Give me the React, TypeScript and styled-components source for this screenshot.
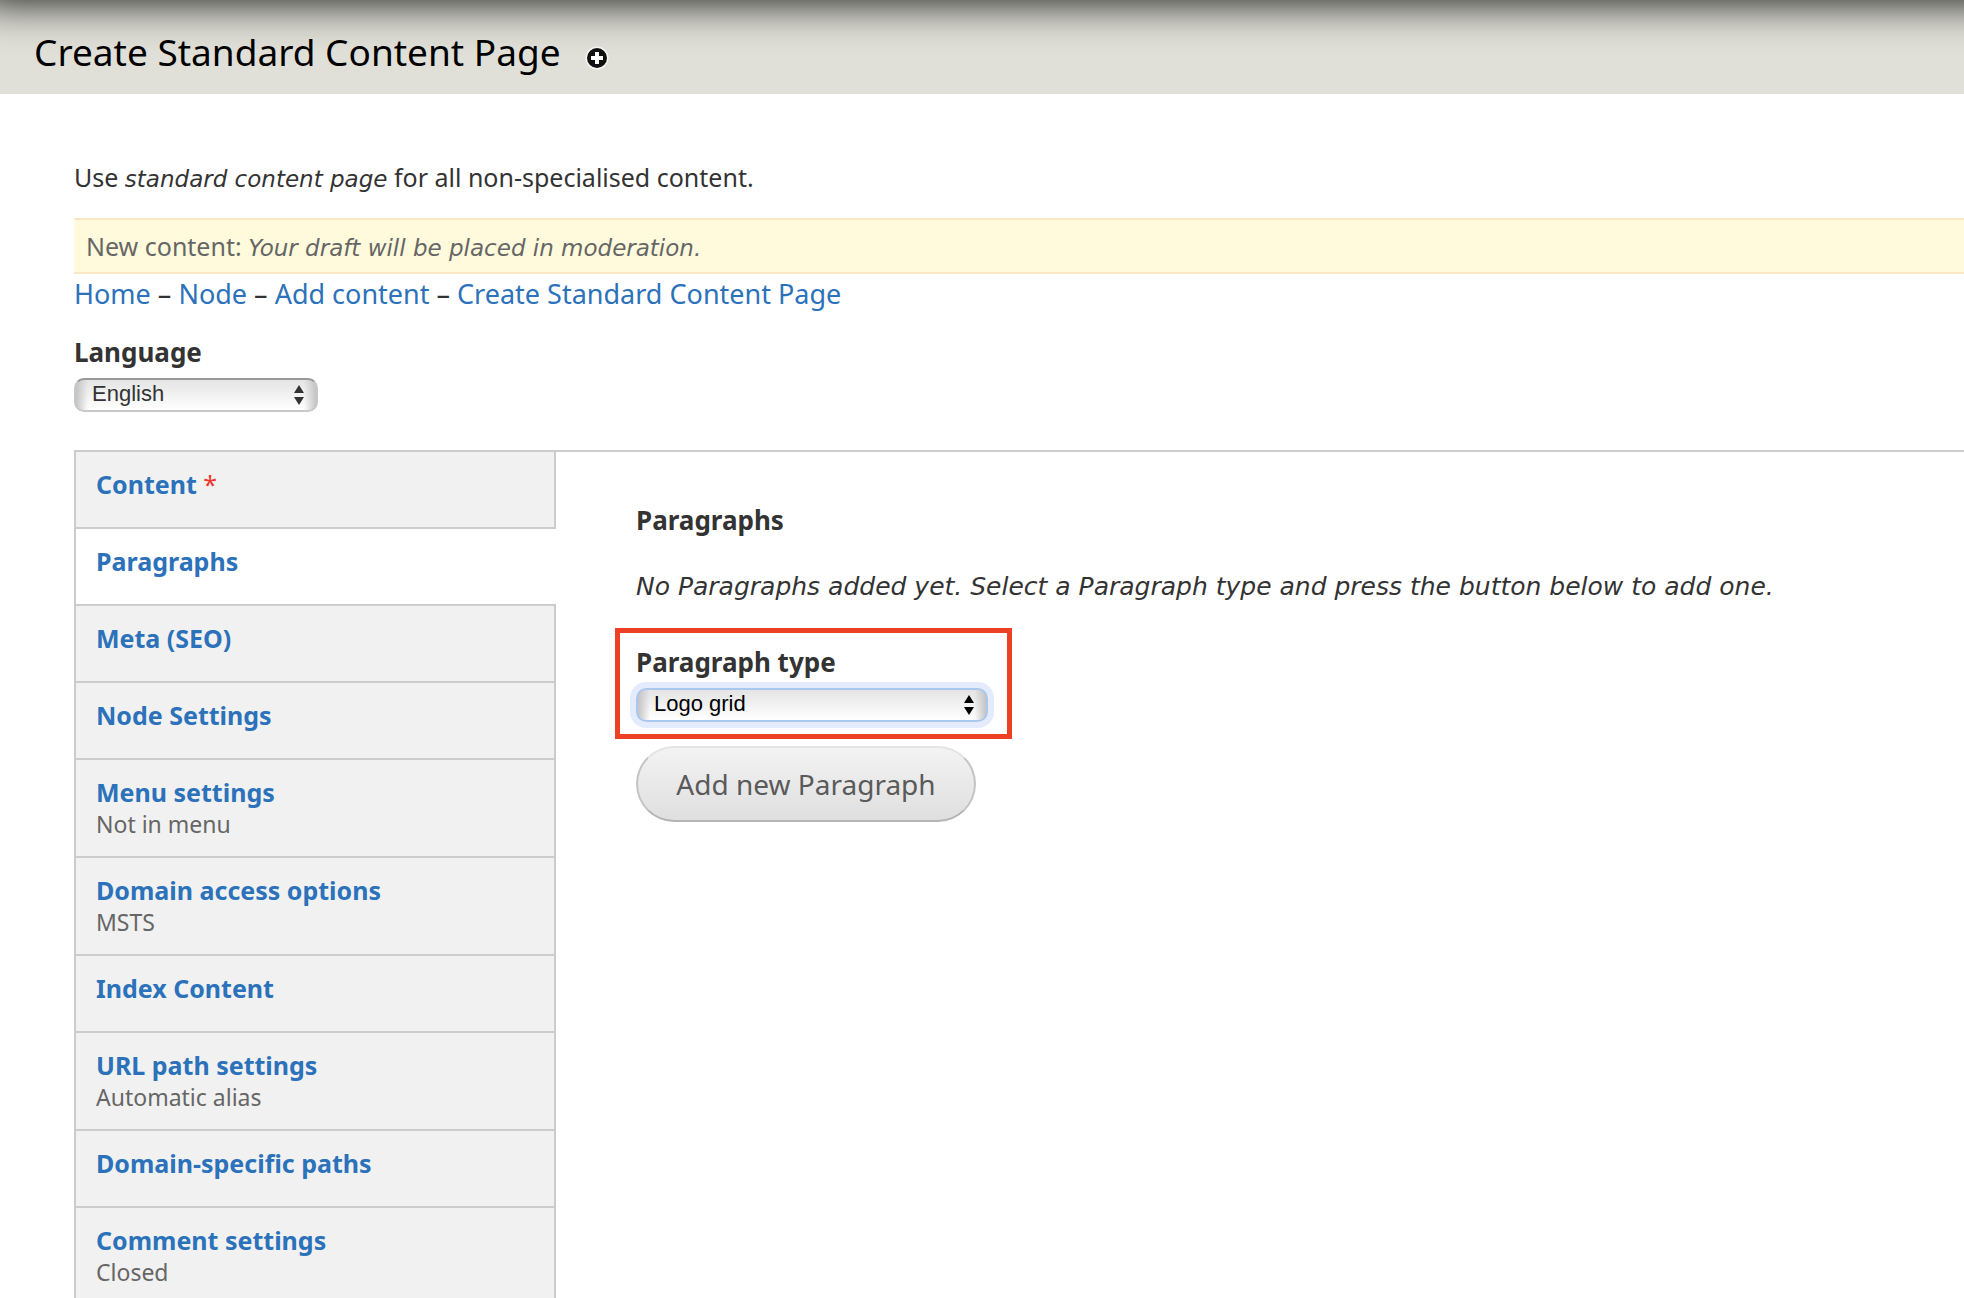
import React from "react";
import styled, { createGlobalStyle, css } from "styled-components";

const sans = `"Lucida Grande", "Noto Sans", "Open Sans", sans-serif`;
const oblique = `"Lucida Grande", "DejaVu Sans", "Noto Sans", sans-serif`;
const control = `"Liberation Sans", Arial, sans-serif`;

const GlobalStyle = createGlobalStyle`
  *, *::before, *::after { box-sizing: border-box; }
  html { overflow: hidden; height: 100%; }
  body {
    margin: 0;
    height: 100%;
    overflow: hidden;
    background: #fff;
    color: #333;
    font-family: ${sans};
    font-size: 25px;
    line-height: 34px;
  }
`;

const Page = styled.div`
  display: flex;
  flex-direction: column;
`;

const ToolbarShadow = styled.div`
  position: absolute;
  z-index: 1;
  top: -100px;
  left: -24px;
  right: -100px;
  height: 100px;
  pointer-events: none;
  box-shadow: 0 0 46px #000;
`;

const Header = styled.header`
  display: flex;
  align-items: center;
  gap: 24px;
  height: 94px;
  padding: 10px 34px 0;
  background: #e0e0d8;
`;

const PageTitle = styled.h1`
  margin: 0;
  color: #000;
  font-size: 37px;
  font-weight: 400;
  line-height: 48px;
`;

const ShortcutButton = styled.button`
  display: flex;
  margin: 12px 0 0;
  padding: 0;
  border: 0;
  background: none;
  cursor: pointer;
`;

const Main = styled.main`
  display: flex;
  flex-direction: column;
  padding: 66px 0 0 74px;
`;

const Emphasis = styled.em`
  font-family: ${oblique};
  font-size: 23px;
  line-height: 24px;
`;

const Help = styled.p`
  margin: 0 0 24px;
`;

const Message = styled.div`
  padding: 9px 12px;
  border: solid #fbe7c4;
  border-width: 2px 0;
  background: #fefadb;
  color: #666;
`;

const Breadcrumb = styled.nav`
  padding: 3px 0 5px;
  font-size: 27px;
`;

const Link = styled.a`
  color: #2c72ba;
  text-decoration: none;
`;

const Field = styled.div<{ $width: number }>`
  position: relative;
  display: flex;
  flex-direction: column;
  gap: 9px;
  width: ${(p) => p.$width}px;
`;

const Label = styled.label`
  font-size: 26px;
  font-weight: 700;
`;

const LanguageArea = styled.div`
  padding: 19px 0 38px;
`;

const HighlightedField = styled(Field)`
  margin-bottom: 24px;
  &::after {
    content: "";
    position: absolute;
    inset: -17px -24px -17px -21px;
    border: 5px solid #ed4125;
    pointer-events: none;
  }
`;

const SelectBox = styled.div`
  display: grid;
  align-items: center;
  > * { grid-area: 1 / 1; }
`;

const SelectControl = styled.select<{ $focused?: boolean }>`
  appearance: none;
  width: 100%;
  height: 34px;
  padding: 0 40px 2px 16px;
  border: 2px solid #c8c8c8;
  border-top-color: #999;
  border-radius: 10px;
  outline: none;
  color: #333;
  font-family: ${control};
  font-size: 22px;
  line-height: 26px;
  background:
    linear-gradient(90deg, #c4c4c4, rgba(224, 224, 224, 0) 12px calc(100% - 12px), #c4c4c4),
    linear-gradient(#e4e4e4, #fff);
  ${(p) => p.$focused && css`
    border-color: #a9c8ed;
    color: #000;
    box-shadow: 0 0 0 6px #e3ebfc;
  `}
`;

const Arrows = styled.svg<{ $dark?: boolean }>`
  justify-self: end;
  margin-right: 14px;
  fill: ${(p) => (p.$dark ? "#000" : "#333")};
  pointer-events: none;
`;

const Tabs = styled.div`
  display: flex;
  align-items: flex-start;
  border-top: 2px solid #ccc;
`;

const TabList = styled.ul`
  flex: 0 0 482px;
  margin: 0;
  padding: 0;
  border-left: 2px solid #ccc;
  list-style: none;
`;

const Tab = styled.li<{ $selected?: boolean }>`
  border-right: ${(p) => (p.$selected ? "0" : "2px solid #ccc")};
  background: ${(p) => (p.$selected ? "#fff" : "#f1f1f1")};
`;

const TabLink = styled.a`
  display: flex;
  flex-direction: column;
  min-height: 77px;
  padding: 15px 20px 17px;
  border-bottom: 2px solid #ccc;
  color: #2c72ba;
  text-decoration: none;
`;

const TabTitle = styled.strong`
  line-height: 34px;
`;

const Required = styled.span`
  color: #f0372b;
  font-weight: 400;
`;

const Summary = styled.span`
  color: #666;
  font-size: 23px;
  line-height: 30px;
`;

const Panel = styled.section`
  flex: 1;
  min-width: 0;
  padding: 51px 40px 0 80px;
`;

const PanelTitle = styled.h2`
  margin: 0 0 33px;
  font-size: 26px;
  line-height: 34px;
`;

const EmptyText = styled.p`
  margin: 0 0 41px;
  font-family: ${oblique};
  font-style: italic;
`;

const AddButton = styled.button`
  min-width: 340px;
  height: 76px;
  padding: 0 36px;
  border: 2px solid #c4c4c4;
  border-top-color: #e4e4e4;
  border-bottom-color: #b4b4b4;
  border-radius: 38px;
  background: linear-gradient(#f3f3f3, #dfdfdf);
  color: #5a5a5a;
  font-family: ${sans};
  font-size: 28px;
  cursor: pointer;
`;

type TabItem = { title: string; summary?: string; required?: boolean };

const tabs: TabItem[] = [
  { title: "Content", required: true },
  { title: "Paragraphs" },
  { title: "Meta (SEO)" },
  { title: "Node Settings" },
  { title: "Menu settings", summary: "Not in menu" },
  { title: "Domain access options", summary: "MSTS" },
  { title: "Index Content" },
  { title: "URL path settings", summary: "Automatic alias" },
  { title: "Domain-specific paths" },
  { title: "Comment settings", summary: "Closed" },
];

const crumbs = ["Home", "Node", "Add content", "Create Standard Content Page"];

function Select({ id, value, focused }: { id: string; value: string; focused?: boolean }) {
  return (
    <SelectBox>
      <SelectControl id={id} $focused={focused} defaultValue={value}>
        <option>{value}</option>
      </SelectControl>
      <Arrows $dark={focused} width="10" height="20" viewBox="0 0 10 20" aria-hidden="true">
        <path d="M5 0 10 8H0zM5 20 0 12h10z" />
      </Arrows>
    </SelectBox>
  );
}

export default function App() {
  return (
    <Page>
      <GlobalStyle />
      <ToolbarShadow />
      <Header>
        <PageTitle>Create Standard Content Page</PageTitle>
        <ShortcutButton type="button" aria-label="Add to shortcuts">
          <svg width="24" height="24" viewBox="0 0 24 24" aria-hidden="true">
            <circle cx="12" cy="12" r="11.5" fill="#fff" opacity="0.7" />
            <circle cx="12" cy="12" r="10" fill="#111" />
            <path d="M12 6v12M6 12h12" stroke="#fff" strokeWidth="4" />
          </svg>
        </ShortcutButton>
      </Header>
      <Main>
        <Help>
          Use <Emphasis>standard content page</Emphasis> for all non-specialised content.
        </Help>
        <Message role="status">
          New content: <Emphasis>Your draft will be placed in moderation.</Emphasis>
        </Message>
        <Breadcrumb aria-label="Breadcrumb">
          {crumbs.map((crumb, i) => (
            <React.Fragment key={crumb}>
              {i > 0 && " – "}
              <Link href="#">{crumb}</Link>
            </React.Fragment>
          ))}
        </Breadcrumb>
        <LanguageArea>
          <Field $width={244}>
            <Label htmlFor="language">Language</Label>
            <Select id="language" value="English" />
          </Field>
        </LanguageArea>
        <Tabs>
          <TabList>
            {tabs.map((tab) => (
              <Tab key={tab.title} $selected={tab.title === "Paragraphs"}>
                <TabLink href="#">
                  <TabTitle>
                    {tab.title}
                    {tab.required && <Required> *</Required>}
                  </TabTitle>
                  {tab.summary && <Summary>{tab.summary}</Summary>}
                </TabLink>
              </Tab>
            ))}
          </TabList>
          <Panel>
            <PanelTitle>Paragraphs</PanelTitle>
            <EmptyText>
              No Paragraphs added yet. Select a Paragraph type and press the button below to add one.
            </EmptyText>
            <HighlightedField $width={352}>
              <Label htmlFor="paragraph-type">Paragraph type</Label>
              <Select id="paragraph-type" value="Logo grid" focused />
            </HighlightedField>
            <AddButton type="button">Add new Paragraph</AddButton>
          </Panel>
        </Tabs>
      </Main>
    </Page>
  );
}
